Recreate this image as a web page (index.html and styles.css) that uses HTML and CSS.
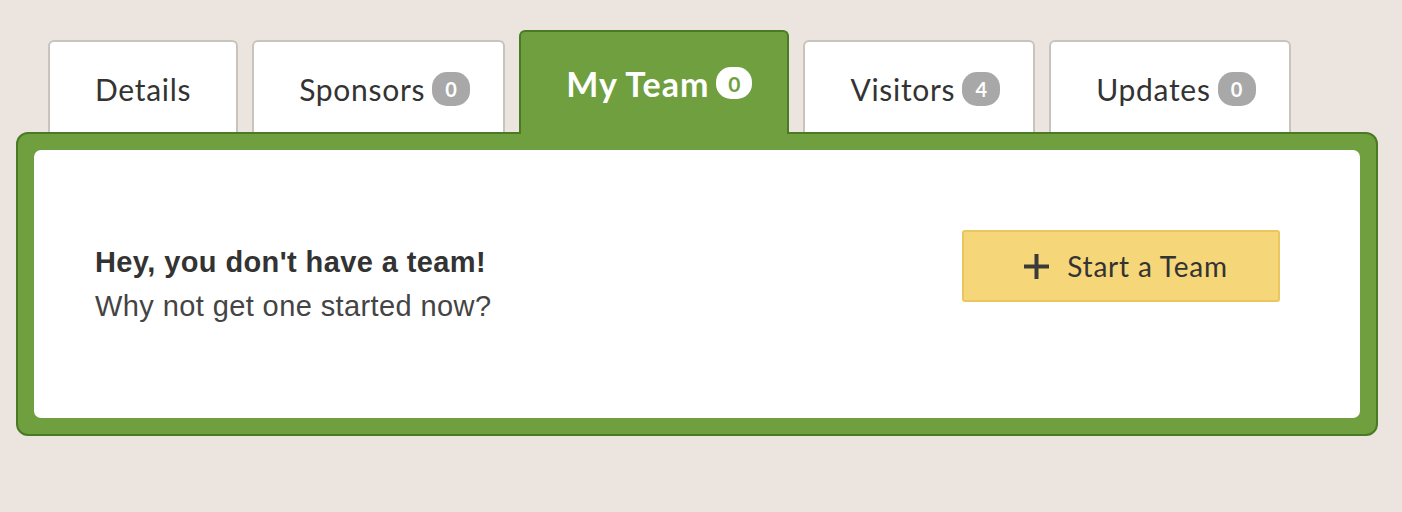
FILE: index.html
```html
<!DOCTYPE html>
<html>
<head>
<meta charset="utf-8">
<link rel="stylesheet" href="styles.css">
</head>
<body>
<div class="page">
  <nav class="tabs">
    <div class="tab">Details</div>
    <div class="tab">Sponsors<span class="badge">0</span></div>
    <div class="tab active">My Team<span class="badge">0</span></div>
    <div class="tab">Visitors<span class="badge">4</span></div>
    <div class="tab">Updates<span class="badge">0</span></div>
  </nav>
  <section class="panel">
    <div class="panel-inner">
      <div class="message">
        <div class="title">Hey, you don't have a team!</div>
        <div class="subtitle">Why not get one started now?</div>
      </div>
      <button class="start-btn">
        <svg class="plus" width="25" height="25" viewBox="0 0 25 25"><path d="M12.5 0v25M0 12.5h25" stroke="#3a3a3a" stroke-width="4"/></svg>
        <span>Start a Team</span>
      </button>
    </div>
  </section>
</div>
</body>
</html>
```
FILE: styles.css
```css
html, body {
  margin: 0;
  padding: 0;
  background: #ece5df;
}
.page {
  padding: 30px 24px 0 16px;
  width: 1362px;
}
.tabs {
  display: flex;
  align-items: flex-end;
  gap: 14px;
  margin-left: 32px;
  height: 104px;
  position: relative;
  z-index: 2;
  margin-bottom: -2px;
}
.tab {
  box-sizing: border-box;
  height: 92px;
  margin-bottom: 2px;
  padding: 4px 45px 0 45px;
  background: #fff;
  border: 2px solid #c9c3bd;
  border-bottom: none;
  border-radius: 6px 6px 0 0;
  display: flex;
  align-items: center;
  font-family: Lato, "Liberation Sans", sans-serif;
  font-size: 30px;
  color: #333;
  letter-spacing: 0.7px;
}
.tab.active {
  height: 104px;
  margin-bottom: 0;
  padding: 0 45px 0 45px;
  background: #6f9f3f;
  border-color: #4b7a24;
  color: #fff;
  font-weight: bold;
  font-size: 34px;
  letter-spacing: 1px;
}
.badge {
  display: inline-flex;
  align-items: center;
  justify-content: center;
  width: 38px;
  height: 34px;
  margin-left: 7px;
  margin-right: -12px;
  border-radius: 15px;
  background: #a8a8a8;
  color: #fff;
  font-size: 20px;
  font-weight: bold;
  letter-spacing: 0;
}
.tab.active .badge {
  background: #fff;
  color: #6f9f3f;
  width: 36px;
  height: 32px;
  margin-left: 7px;
  margin-right: -10px;
  font-size: 21px;
}
.panel {
  position: relative;
  z-index: 1;
  background: #6f9f3f;
  border: 2px solid #4b7a24;
  border-radius: 12px;
  padding: 16px;
}
.panel-inner {
  background: #fff;
  border-radius: 7px;
  height: 268px;
  box-sizing: border-box;
  padding: 78px 80px 0 61px;
  display: flex;
  justify-content: space-between;
  align-items: flex-start;
}
.message {
  font-family: "Liberation Sans", Arial, sans-serif;
  font-size: 29px;
  letter-spacing: 0.4px;
  color: #333;
  line-height: 44px;
  padding-top: 12px;
}
.title {
  font-weight: bold;
}
.subtitle {
  color: #444;
}
.start-btn {
  width: 318px;
  height: 72px;
  margin-top: 2px;
  background: #f5d679;
  border: 2px solid #e9c65e;
  border-radius: 3px;
  display: flex;
  align-items: center;
  justify-content: center;
  gap: 18px;
  font-family: Lato, "Liberation Sans", sans-serif;
  font-size: 28px;
  letter-spacing: 0.8px;
  color: #333;
  padding: 0 0 0 10px;
}
.plus {
  display: block;
}
```
